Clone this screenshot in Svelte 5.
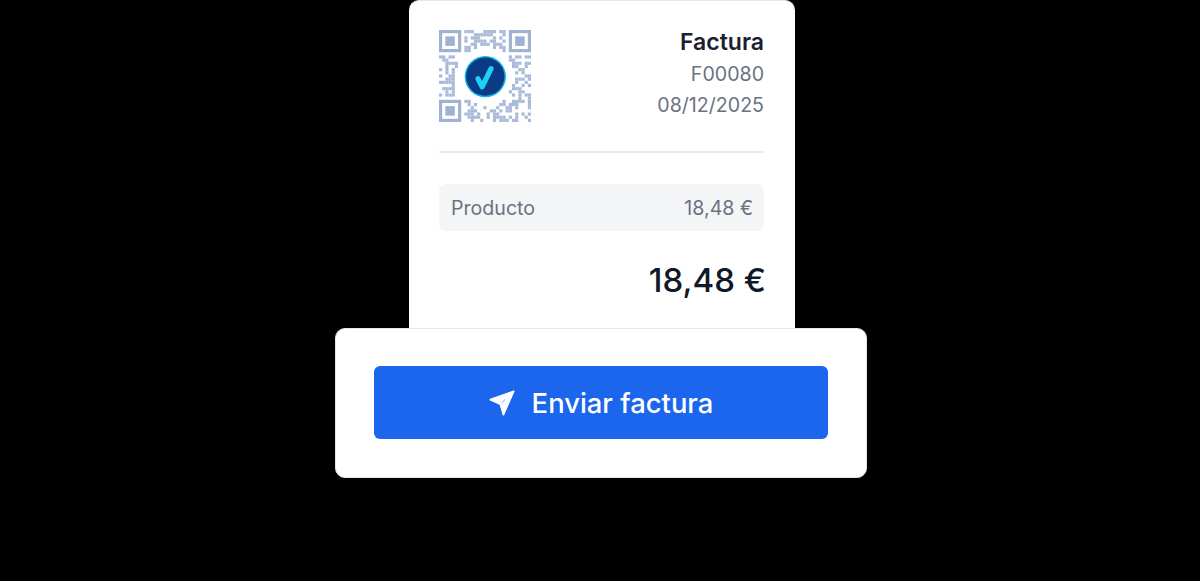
<script>
  // fake QR matrix, 29 modules, seeded so it draws the same each time
  const size = 29;
  let seed = 73;
  function rnd() {
    seed = (seed * 1103515245 + 12345) & 0x7fffffff;
    return (seed >> 12) % 100 / 100;
  }

  const inFinder = (x, y) =>
    (x < 8 && y < 8) || (x > size - 9 && y < 8) || (x < 8 && y > size - 9);

  const modules = [];
  for (let y = 0; y < size; y++) {
    for (let x = 0; x < size; x++) {
      const dist = Math.hypot(x - 14, y - 14);
      if (inFinder(x, y) || dist < 9.4) continue;
      if (rnd() > 0.5) modules.push({ x, y });
    }
  }

  const finders = [
    [0, 0],
    [size - 7, 0],
    [0, size - 7]
  ];
</script>

<main class="stage">
  <section class="invoice">
    <header class="head">
      <div class="qr">
        <svg class="code" viewBox="0 0 29 29" width="92" height="92" aria-hidden="true">
          {#each modules as m}
            <rect x={m.x} y={m.y} width="1" height="1" fill="#a9bad9" />
          {/each}
          {#each finders as [fx, fy]}
            <rect x={fx + 0.5} y={fy + 0.5} width="6" height="6" fill="none" stroke="#9fb2d4" />
            <rect x={fx + 2} y={fy + 2} width="3" height="3" fill="#9fb2d4" />
          {/each}
        </svg>
        <svg class="badge" viewBox="0 0 29 29" width="92" height="92" aria-hidden="true">
          <circle cx="14.6" cy="14.7" r="6.5" fill="#0cb4e8" />
          <circle cx="14.6" cy="14.7" r="6.05" fill="#0b3b85" />
          <path d="M12.3 15.4 L13.6 17.9 L16.4 12.2" fill="none" stroke="#1fd0f5" stroke-width="1.65" stroke-linecap="round" stroke-linejoin="round" />
        </svg>
      </div>
      <div class="meta">
        <h1>Factura</h1>
        <p>F00080</p>
        <p>08/12/2025</p>
      </div>
    </header>

    <hr />

    <div class="line">
      <span>Producto</span>
      <span>18,48 €</span>
    </div>

    <div class="total">18,48 €</div>
  </section>

  <section class="action">
    <button type="button">
      <svg width="26" height="26" viewBox="0 0 26 26" aria-hidden="true">
        <path d="M1.4 9.6 L24.6 1.4 L14.4 24.6 L11.4 14.2 Z" fill="#fff" stroke="#fff" stroke-width="1.8" stroke-linejoin="round" />
        <path d="M12.4 13 L16 9.6" stroke="#1c66ee" stroke-width="0.6" />
      </svg>
      Enviar factura
    </button>
  </section>
</main>

<style>
  :global(body) {
    background: #000;
  }

  .stage {
    height: 581px;
    overflow: hidden;
    display: flex;
    flex-direction: column;
    align-items: center;
    padding-left: 2px;
    font-family: Inter, "Liberation Sans", sans-serif;
    box-sizing: border-box;
  }

  .invoice {
    width: 386px;
    height: 328px;
    box-sizing: border-box;
    margin-left: 2px;
    padding: 30px 31px 0 30px;
    background: #fff;
    border-top-right-radius: 10px;
    border-top-left-radius: 10px;
    border-top: 1px solid #e5e7eb;
  }

  .head {
    display: flex;
    justify-content: space-between;
    height: 120px;
  }

  .qr {
    position: relative;
    width: 92px;
    height: 92px;
    margin-top: -1px;
  }

  .qr svg {
    position: absolute;
    inset: 0;
    display: block;
  }

  /* the source shot is a soft render, so the code should not look crisp */
  .code {
    filter: blur(0.5px);
  }

  .meta {
    text-align: right;
  }

  h1 {
    margin: -1px 0 0;
    font-size: 23px;
    line-height: 25px;
    font-weight: 600;
    color: #1a2030;
  }

  .meta p {
    margin: 6px 0 0;
    font-size: 19.6px;
    line-height: 25px;
    color: #6b7280;
  }

  h1 + p {
    padding-top: 1px;
  }

  hr {
    margin: 0;
    border: 0;
    height: 2px;
    background: #e8eaee;
  }

  .line {
    margin-top: 31px;
    height: 47px;
    padding: 0 11px 0 12px;
    display: flex;
    align-items: center;
    justify-content: space-between;
    background: #f3f5f7;
    border-radius: 7px;
    font-size: 19.6px;
    color: #6b7280;
  }

  .total {
    margin: 27px -2px 0 0;
    text-align: right;
    font-size: 33px;
    line-height: 44px;
    font-weight: 550;
    color: #111827;
  }

  .action {
    width: 532px;
    height: 150px;
    box-sizing: border-box;
    padding: 37px 38px;
    background: #fff;
    border: 1px solid #e5e7eb;
    border-radius: 10px;
  }

  button {
    width: 100%;
    height: 73px;
    display: flex;
    align-items: center;
    justify-content: center;
    gap: 17px;
    border: 0;
    border-radius: 6px;
    background: #1c66ee;
    color: #fff;
    font-family: inherit;
    font-size: 27.4px;
    font-weight: 550;
  }
</style>
